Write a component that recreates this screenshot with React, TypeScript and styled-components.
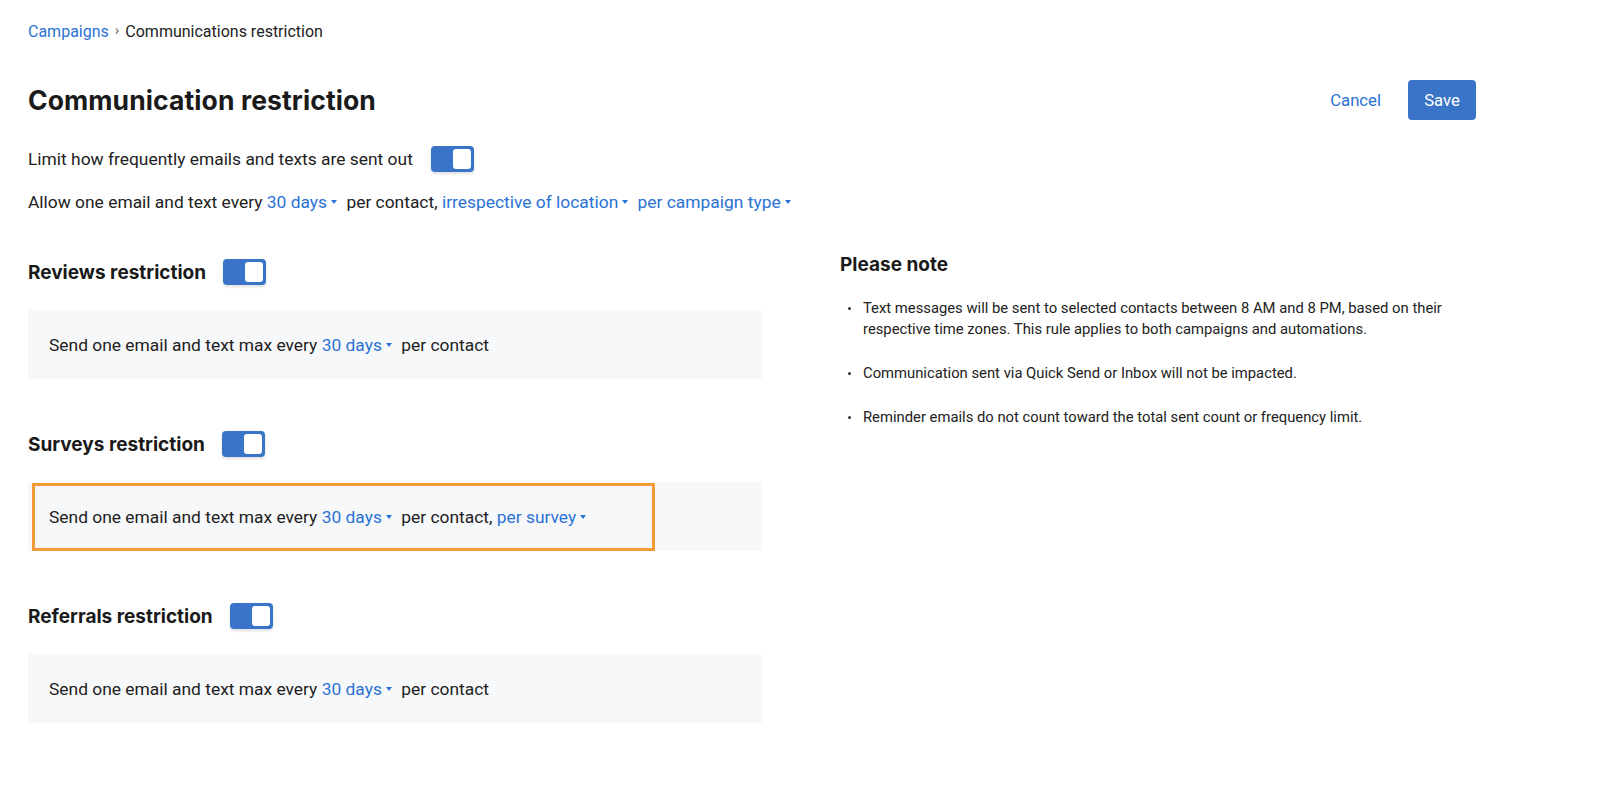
import React from 'react'
import styled, { createGlobalStyle } from 'styled-components'

const GlobalStyle = createGlobalStyle`
  body {
    margin: 0;
    background: #ffffff;
    font-family: Roboto, 'Liberation Sans', sans-serif;
    color: #212121;
  }
`

type Option = { label: string }
type Rule = {
  title: string
  lead: string
  options: (string | Option)[]
  highlighted?: boolean
}

const rules: Rule[] = [
  { title: 'Reviews restriction', lead: 'Send one email and text max every', options: [{ label: '30 days' }, 'per contact'] },
  {
    title: 'Surveys restriction',
    lead: 'Send one email and text max every',
    options: [{ label: '30 days' }, 'per contact,', { label: 'per survey' }],
    highlighted: true,
  },
  { title: 'Referrals restriction', lead: 'Send one email and text max every', options: [{ label: '30 days' }, 'per contact'] },
]

const notes = [
  'Text messages will be sent to selected contacts between 8 AM and 8 PM, based on their respective time zones. This rule applies to both campaigns and automations.',
  'Communication sent via Quick Send or Inbox will not be impacted.',
  'Reminder emails do not count toward the total sent count or frequency limit.',
]

const Caret = () => (
  <svg width="6" height="4" viewBox="0 0 6 4" aria-hidden="true">
    <path d="M0 0h6L3 4z" fill="currentColor" />
  </svg>
)

const Dropdown = ({ label }: { label: string }) => (
  <DropLink>
    {label}
    <Caret />
  </DropLink>
)

const renderParts = (parts: (string | Option)[]) =>
  parts.map((p, i) => (
    <React.Fragment key={i}>
      {' '}
      {typeof p === 'string' ? <span>{p}</span> : <Dropdown label={p.label} />}
    </React.Fragment>
  ))

const App = () => {
  return (
    <Page>
      <GlobalStyle />
      <Breadcrumb>
        <Crumb>Campaigns</Crumb>
        <Chevron>›</Chevron>
        <span>Communications restriction</span>
      </Breadcrumb>

      <HeaderRow>
        <Title>Communication restriction</Title>
        <Actions>
          <TextButton>Cancel</TextButton>
          <PrimaryButton>Save</PrimaryButton>
        </Actions>
      </HeaderRow>

      <ToggleRow>
        <span>Limit how frequently emails and texts are sent out</span>
        <Toggle />
      </ToggleRow>

      <Sentence>
        <span>Allow one email and text every</span>
        {renderParts([{ label: '30 days' }, 'per contact,', { label: 'irrespective of location' }, { label: 'per campaign type' }])}
      </Sentence>

      <Columns>
        <LeftColumn>
          {rules.map((rule) => (
            <Section key={rule.title}>
              <SectionHeading>
                <h2>{rule.title}</h2>
                <Toggle />
              </SectionHeading>
              <RuleBox>
                <RuleText>
                  <span>{rule.lead}</span>
                  {renderParts(rule.options)}
                </RuleText>
                {rule.highlighted ? <Highlight /> : null}
              </RuleBox>
            </Section>
          ))}
        </LeftColumn>

        <NoteColumn>
          <NoteTitle>Please note</NoteTitle>
          <NoteList>
            {notes.map((n) => (
              <li key={n}>{n}</li>
            ))}
          </NoteList>
        </NoteColumn>
      </Columns>
    </Page>
  )
}

const Page = styled.div`
  padding: 21px 124px 40px 28px;
`

const Breadcrumb = styled.div`
  display: flex;
  align-items: center;
  gap: 6px;
  height: 20px;
  font-size: 16px;
  color: #222;
`

const Crumb = styled.span`
  color: #2a72d4;
`

const Chevron = styled.span`
  color: #666;
  font-size: 15px;
  position: relative;
  top: -1px;
`

const HeaderRow = styled.div`
  display: flex;
  align-items: center;
  justify-content: space-between;
  height: 40px;
  margin-top: 39px;
`

const Title = styled.h1`
  margin: 0;
  font-family: Inter, 'Noto Sans', sans-serif;
  font-weight: 700;
  font-size: 26.5px;
  letter-spacing: 0.1px;
  color: #1a1a1a;
`

const Actions = styled.div`
  display: flex;
  align-items: center;
  gap: 27px;
`

const TextButton = styled.button`
  border: none;
  background: none;
  padding: 0;
  font-family: Roboto, sans-serif;
  font-size: 16.7px;
  color: #2a72d4;
  cursor: pointer;
`

const PrimaryButton = styled.button`
  width: 68px;
  height: 40px;
  border: none;
  border-radius: 4px;
  background: #3a74c9;
  color: #fff;
  font-family: Roboto, sans-serif;
  font-size: 16.7px;
  cursor: pointer;
`

const Toggle = styled.span`
  position: relative;
  display: inline-block;
  width: 43px;
  height: 26px;
  border-radius: 4px;
  background: #3a74c9;
  box-shadow: 0 2px 3px rgba(0, 0, 0, 0.12);
  flex: none;

  &::after {
    content: '';
    position: absolute;
    right: 3px;
    top: 3px;
    width: 18px;
    height: 20px;
    border-radius: 3px;
    background: #fff;
  }
`

const ToggleRow = styled.div`
  display: flex;
  align-items: center;
  gap: 18px;
  height: 26px;
  margin-top: 26px;
  font-size: 17.4px;
`

const Sentence = styled.div`
  line-height: 24px;
  margin-top: 18px;
  font-size: 17.4px;
  white-space: nowrap;
`

const DropLink = styled.span`
  color: #2a72d4;
  cursor: pointer;
  margin-right: 5px;

  svg {
    margin-left: 4px;
    vertical-align: middle;
    position: relative;
    top: -1px;
  }
`

const Columns = styled.div`
  display: flex;
  align-items: flex-start;
  gap: 78px;
  margin-top: 39px;
`

const LeftColumn = styled.div`
  width: 734px;
  flex: none;
  padding-top: 6px;
  display: flex;
  flex-direction: column;
  gap: 52px;
`

const Section = styled.section`
  display: flex;
  flex-direction: column;
  gap: 25px;
`

const SectionHeading = styled.div`
  display: flex;
  align-items: center;
  gap: 17px;
  height: 26px;

  h2 {
    margin: 0;
    font-family: Inter, 'Noto Sans', sans-serif;
    font-weight: 700;
    font-size: 19px;
    color: #1a1a1a;
  }
`

const RuleBox = styled.div`
  position: relative;
  display: flex;
  align-items: center;
  height: 69px;
  padding-left: 21px;
  background: #f7f8fa;
`

const RuleText = styled.p`
  margin: 0;
  font-size: 17.4px;
  line-height: 24px;
  white-space: nowrap;
`

const Highlight = styled.span`
  position: absolute;
  left: 4px;
  top: 1px;
  width: 623px;
  height: 68px;
  box-sizing: border-box;
  border: 3px solid #f29b38;
  pointer-events: none;
`

const NoteColumn = styled.aside`
  flex: 1;
`

const NoteTitle = styled.h3`
  margin: 0;
  line-height: 24px;
  font-family: Inter, 'Noto Sans', sans-serif;
  font-weight: 700;
  font-size: 19px;
  color: #1a1a1a;
`

const NoteList = styled.ul`
  margin: 21px 0 0;
  padding: 0 0 0 23px;
  list-style: none;
  font-size: 14.8px;
  line-height: 21px;
  color: #222;

  li {
    position: relative;
    margin-bottom: 23px;
  }

  li::before {
    content: '';
    position: absolute;
    left: -15px;
    top: 9px;
    width: 3px;
    height: 3px;
    border-radius: 50%;
    background: #333;
  }
`

export default App
